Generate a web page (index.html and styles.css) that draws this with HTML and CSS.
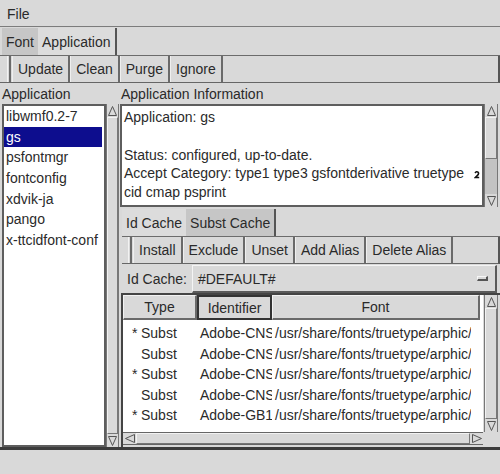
FILE: index.html
```html
<!DOCTYPE html>
<html lang="en">
<head>
  <meta charset="UTF-8" />
  <title>Font Manager</title>
  <link rel="stylesheet" href="styles.css">
</head>
<body>
  <div class="menubar"><span>File</span></div>

  <div class="tabs">
    <div class="tab">Font</div>
    <div class="tab active">Application</div>
  </div>

  <div class="toolbar">
    <div class="grip"></div>
    <div class="btn">Update</div>
    <div class="btn">Clean</div>
    <div class="btn">Purge</div>
    <div class="btn">Ignore</div>
  </div>

  <div class="main">
    <!-- left: application list -->
    <div class="col-left">
      <div class="label">Application</div>
      <div class="listwrap">
        <ul class="list">
          <li>libwmf0.2-7</li>
          <li class="sel">gs</li>
          <li>psfontmgr</li>
          <li>fontconfig</li>
          <li>xdvik-ja</li>
          <li>pango</li>
          <li>x-ttcidfont-conf</li>
        </ul>
        <div class="vscroll">
          <div class="arrow"><svg width="9" height="10" viewBox="0 0 9 10"><path d="M4.5 0.5 L8.5 9.5 H0.5 Z" fill="none" stroke="#555"/></svg></div>
          <div class="slider full"></div>
          <div class="arrow"><svg width="9" height="10" viewBox="0 0 9 10"><path d="M0.5 0.5 H8.5 L4.5 9.5 Z" fill="none" stroke="#555"/></svg></div>
        </div>
      </div>
    </div>

    <!-- right: info + caches -->
    <div class="col-right">
      <div class="label">Application Information</div>
      <div class="info">
        <div class="info-text">
          <div>Application: gs</div>
          <div>&nbsp;</div>
          <div>Status: configured, up-to-date.</div>
          <div>Accept Category: type1 type3 gsfontderivative truetype<svg class="wrapmark" width="6" height="8" viewBox="0 0 6 8"><path d="M1 2 Q2.5 0 4.3 1.4 Q5.2 3 3.2 4.6 L1.2 6.6 H5.2" fill="none" stroke="#111" stroke-width="1.5"/></svg></div>
          <div>cid cmap psprint</div>
        </div>
        <div class="vscroll">
          <div class="arrow"><svg width="9" height="10" viewBox="0 0 9 10"><path d="M4.5 0.5 L8.5 9.5 H0.5 Z" fill="none" stroke="#555"/></svg></div>
          <div class="slider part"></div>
          <div class="trough"></div>
          <div class="arrow"><svg width="9" height="10" viewBox="0 0 9 10"><path d="M0.5 0.5 H8.5 L4.5 9.5 Z" fill="none" stroke="#555"/></svg></div>
        </div>
      </div>

      <div class="notebook">
        <div class="tabs sub">
          <div class="tab active">Id Cache</div>
          <div class="tab">Subst Cache</div>
        </div>

        <div class="toolbar">
          <div class="grip"></div>
          <div class="btn">Install</div>
          <div class="btn">Exclude</div>
          <div class="btn">Unset</div>
          <div class="btn">Add Alias</div>
          <div class="btn">Delete Alias</div>
        </div>

        <div class="idrow">
          <span>Id Cache:</span>
          <div class="dropdown">
            <span>#DEFAULT#</span>
            <span class="indicator"></span>
          </div>
        </div>

        <div class="table">
          <div class="table-top">
            <div class="grid-area">
              <div class="thead">
                <div class="th">Type</div>
                <div class="th pressed">Identifier</div>
                <div class="th">Font</div>
              </div>
              <div class="tbody">
                <div class="tr"><div class="td type"><span class="star">*</span>Subst</div><div class="td">Adobe-CNS1-0</div><div class="td">/usr/share/fonts/truetype/arphic/bsmi00lp.ttf</div></div>
                <div class="tr"><div class="td type"><span class="star"></span>Subst</div><div class="td">Adobe-CNS1-1</div><div class="td">/usr/share/fonts/truetype/arphic/bsmi00lp.ttf</div></div>
                <div class="tr"><div class="td type"><span class="star">*</span>Subst</div><div class="td">Adobe-CNS1-2</div><div class="td">/usr/share/fonts/truetype/arphic/bkai00mp.ttf</div></div>
                <div class="tr"><div class="td type"><span class="star"></span>Subst</div><div class="td">Adobe-CNS1-3</div><div class="td">/usr/share/fonts/truetype/arphic/bkai00mp.ttf</div></div>
                <div class="tr"><div class="td type"><span class="star">*</span>Subst</div><div class="td">Adobe-GB1-0</div><div class="td">/usr/share/fonts/truetype/arphic/gbsn00lp.ttf</div></div>
              </div>
            </div>
            <div class="vscroll">
              <div class="arrow"><svg width="9" height="10" viewBox="0 0 9 10"><path d="M4.5 0.5 L8.5 9.5 H0.5 Z" fill="none" stroke="#555"/></svg></div>
              <div class="slider full"></div>
              <div class="arrow"><svg width="9" height="10" viewBox="0 0 9 10"><path d="M0.5 0.5 H8.5 L4.5 9.5 Z" fill="none" stroke="#555"/></svg></div>
            </div>
          </div>
          <div class="table-bottom">
            <div class="hscroll">
              <div class="arrow"><svg width="10" height="9" viewBox="0 0 10 9"><path d="M0.5 4.5 L9.5 0.5 V8.5 Z" fill="none" stroke="#555"/></svg></div>
              <div class="slider full"></div>
              <div class="arrow"><svg width="10" height="9" viewBox="0 0 10 9"><path d="M9.5 4.5 L0.5 0.5 V8.5 Z" fill="none" stroke="#555"/></svg></div>
            </div>
            <div class="corner"></div>
          </div>
        </div>
      </div>
    </div>
  </div>

  <div class="status"></div>
</body>
</html>
```

FILE: styles.css
```css
* {
  box-sizing: border-box;
}

body {
  margin: 0;
  width: 500px;
  height: 474px;
  overflow: hidden;
  background: #d9d9d9;
  color: #2a2a2a;
  font-family: "Liberation Sans", Arial, sans-serif;
  font-size: 14px;
  display: flex;
  flex-direction: column;
}

.menubar {
  height: 27px;
  flex: none;
  padding: 1px 0 0 7px;
  border-bottom: 1px solid #7c7c7c;
  display: flex;
  align-items: center;
}

/* notebook tabs */
.tabs {
  height: 29px;
  flex: none;
  display: flex;
  padding: 1px 0 0 2px;
  border-bottom: 1px solid #6c6c6c;
}

.tabs.sub {
  margin-top: 1px;
  padding-left: 0;
}

.tab {
  padding: 0 4px;
  display: flex;
  align-items: center;
  background: #c6c6c6;
}

.tab.active {
  background: #dcdcdc;
}

.tab:last-child {
  border-right: 2px solid #555;
}

/* button bars */
.toolbar {
  height: 27px;
  flex: none;
  display: flex;
  border-bottom: 1px solid #666;
  border-right: 2px solid #555;
}

.grip {
  width: 4px;
  margin: 0 1px 0 7px;
  border-left: 1px solid #f2f2f2;
  border-right: 2px solid #6a6a6a;
}

.notebook .grip {
  margin-left: 6px;
}

.btn {
  padding: 0 5px;
  display: flex;
  align-items: center;
  border-left: 1px solid #efefef;
  border-right: 2px solid #6a6a6a;
}

.main {
  flex: 1;
  display: flex;
  min-height: 0;
}

.label {
  height: 21px;
  flex: none;
  display: flex;
  align-items: center;
}

.col-left {
  width: 120px;
  display: flex;
  flex-direction: column;
}

.col-left .label {
  padding-left: 2px;
}

.col-right {
  flex: 1;
  display: flex;
  flex-direction: column;
  min-width: 0;
}

.col-right .label {
  padding-left: 1px;
}

.listwrap {
  flex: 1;
  display: flex;
}

.list {
  width: 104px;
  margin: 0 0 0 2px;
  padding: 0;
  list-style: none;
  background: #fff;
  border: 2px solid #5e5e5e;
  overflow: hidden;
}

.list li {
  height: 20.67px;
  line-height: 20.67px;
  padding-left: 2px;
  white-space: nowrap;
}

.list li.sel {
  background: #0d0d8e;
  color: #fff;
  margin-right: 2px;
}

/* scrollbars */
.vscroll {
  width: 13px;
  flex: none;
  display: flex;
  flex-direction: column;
  background: #c3c3c3;
  border-left: 1px solid #777;
  border-right: 1px solid #777;
}

.arrow {
  height: 13px;
  flex: none;
  display: flex;
  align-items: center;
  justify-content: center;
  background: #d9d9d9;
}

.slider {
  background: #d9d9d9;
  border-top: 1px solid #f2f2f2;
  border-left: 1px solid #f2f2f2;
  border-bottom: 1px solid #777;
  border-right: 1px solid #777;
}

.slider.full {
  flex: 1;
}

.slider.part {
  height: 42px;
  flex: none;
}

.trough {
  flex: 1;
}

.hscroll {
  flex: 1;
  height: 13px;
  display: flex;
  background: #c3c3c3;
  border-top: 1px solid #666;
  border-bottom: 1px solid #666;
}

.hscroll .arrow {
  width: 13px;
  height: auto;
}

/* application information */
.info {
  height: 103px;
  flex: none;
  display: flex;
  margin-right: 2px;
}

.info-text {
  flex: 1;
  background: #fff;
  border: 2px solid #5e5e5e;
  padding: 2px 0 0 2px;
  line-height: 18.8px;
  white-space: nowrap;
  overflow: hidden;
}

.info .vscroll {
  width: 14px;
}

.wrapmark {
  margin-left: 10px;
  vertical-align: -1px;
}

.notebook {
  flex: 1;
  display: flex;
  flex-direction: column;
  margin-left: 2px;
  min-height: 0;
}

.idrow {
  height: 28px;
  flex: none;
  margin-top: 1px;
  padding-left: 5px;
  display: flex;
  align-items: center;
}

.dropdown {
  flex: 1;
  height: 28px;
  margin: 0 3px 0 5px;
  padding: 0 7px 0 5px;
  display: flex;
  align-items: center;
  justify-content: space-between;
  border-top: 1px solid #f4f4f4;
  border-left: 1px solid #f4f4f4;
  border-bottom: 2px solid #5a5a5a;
  border-right: 2px solid #5a5a5a;
}

.indicator {
  width: 11px;
  height: 5px;
  border-top: 1px solid #f6f6f6;
  border-left: 1px solid #f6f6f6;
  border-bottom: 2px solid #555;
  border-right: 2px solid #555;
}

/* cache table */
.table {
  flex: 1;
  display: flex;
  flex-direction: column;
  margin-left: -1px;
  border-top: 2px solid #444;
  border-left: 2px solid #444;
  min-height: 0;
}

.table-top {
  flex: 1;
  display: flex;
  min-height: 0;
}

.grid-area {
  flex: 1;
  display: flex;
  flex-direction: column;
  background: #fff;
  min-width: 0;
}

.table-top .vscroll {
  width: 14px;
  margin: 0 2px 0 1px;
}

.thead {
  height: 25px;
  flex: none;
  display: grid;
  grid-template-columns: 74px 75px 208px;
}

.th {
  display: flex;
  align-items: center;
  justify-content: center;
  background: #d9d9d9;
  border-top: 1px solid #f2f2f2;
  border-left: 1px solid #f2f2f2;
  border-bottom: 2px solid #6a6a6a;
  border-right: 2px solid #6a6a6a;
}

.th.pressed {
  border: 2px solid #333;
}

.tbody {
  flex: 1;
  padding-top: 3px;
  overflow: hidden;
}

.tr {
  height: 20.5px;
  line-height: 20.5px;
  display: grid;
  grid-template-columns: 74px 75px 199px;
}

.td {
  white-space: nowrap;
  overflow: hidden;
  padding-left: 3px;
}

.td.type {
  padding-left: 9px;
}

.star {
  display: inline-block;
  width: 9px;
}

.table-bottom {
  height: 15px;
  flex: none;
  display: flex;
  padding-bottom: 2px;
}

.corner {
  width: 17px;
}

.status {
  height: 27px;
  flex: none;
  border-top: 3px solid #3c3c3c;
}
```
